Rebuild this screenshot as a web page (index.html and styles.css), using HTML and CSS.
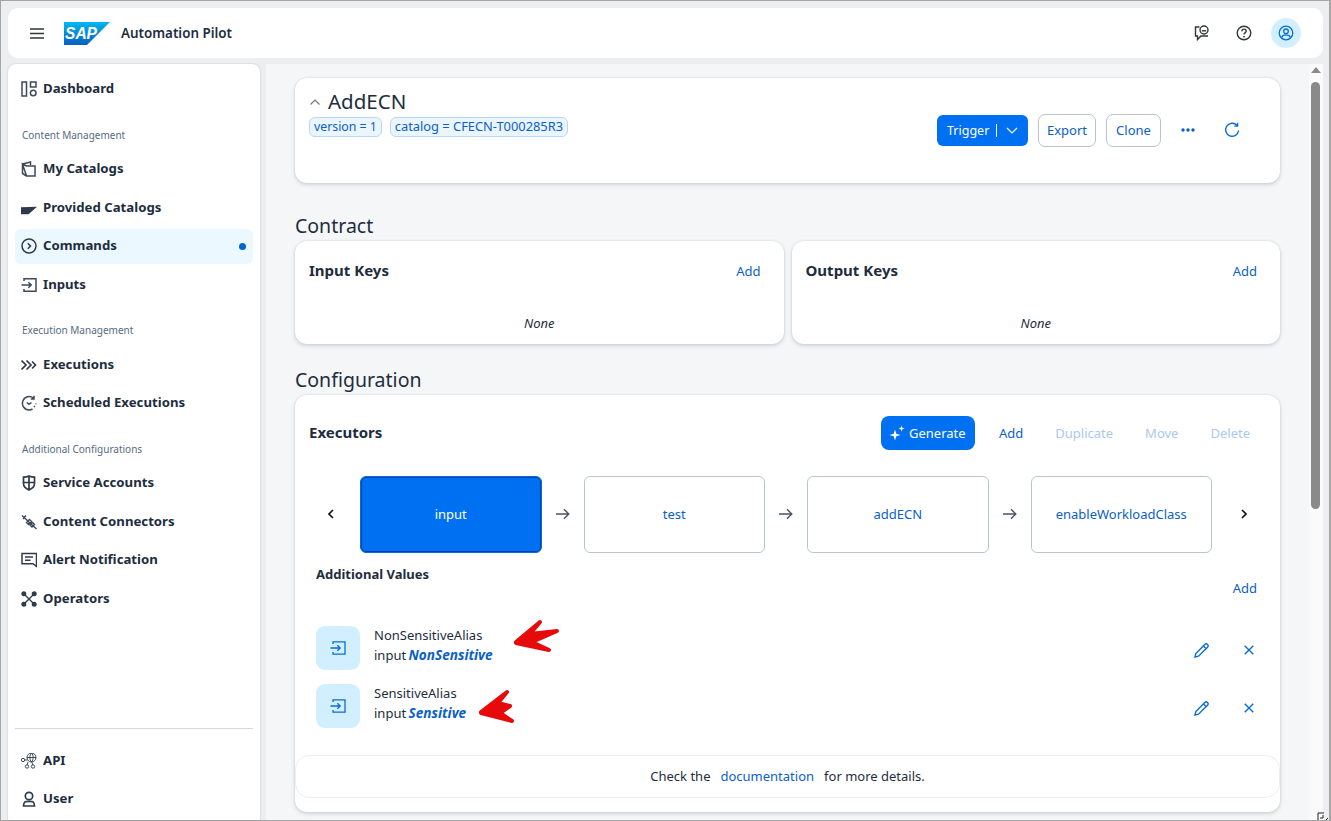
FILE: index.html
```html
<!DOCTYPE html>
<html lang="en">
<head>
<meta charset="utf-8">
<title>Automation Pilot</title>
<link rel="stylesheet" href="styles.css">
</head>
<body>
<div class="app">
  <header class="topbar">
    <div class="brand">
      <svg class="ico-menu" width="14" height="11" viewBox="0 0 14 11"><path d="M0 1h14M0 5.500h14M0 10h14" stroke="#32363a" stroke-width="1.500" fill="none"/></svg>
      <svg class="logo" width="46" height="23" viewBox="0 0 46 23"><defs><linearGradient id="sapg" x1="0" y1="0" x2="0" y2="1"><stop offset="0" stop-color="#00b8f1"/><stop offset="1" stop-color="#0a5fc0"/></linearGradient></defs><polygon points="0,0 46,0 23,23 0,23" fill="url(#sapg)"/><text class="logo-text" x="1" y="17" textLength="32" lengthAdjust="spacingAndGlyphs">SAP</text></svg>
      <span class="product">Automation Pilot</span>
    </div>
    <div class="top-actions">
      <svg width="18" height="18" viewBox="0 0 18 18" fill="none" stroke="#32363a" stroke-width="1.400"><path d="M6.500 3H2.500v9h2v3.500l3.500-3.500h7"/><circle cx="11" cy="6" r="4"/><path d="M8.800 6.800h4.400"/></svg>
      <svg width="18" height="18" viewBox="0 0 18 18" fill="none" stroke="#32363a" stroke-width="1.400"><circle cx="9" cy="9" r="6.800"/><path d="M6.900 7.200c0-1.300 1-2.100 2.200-2.100s2.100.9 2.100 2c0 1.900-2.200 1.700-2.200 3.500"/><path d="M9 12v1.400" stroke-width="1.600"/></svg>
      <span class="avatar"><svg width="16" height="16" viewBox="0 0 16 16" fill="none" stroke="#0a6ed1" stroke-width="1.300"><circle cx="8" cy="8" r="6.800"/><circle cx="8" cy="6.300" r="2.300"/><path d="M3.600 12.600c.5-1.900 2.300-2.700 4.400-2.700s3.900.8 4.400 2.700"/></svg></span>
    </div>
  </header>

  <div class="body-row">
    <nav class="sidebar">
      <div class="nav-top">
        <a class="nav-item"><svg class="nav-ico" viewBox="0 0 16 16" fill="none" stroke="#3c4a5a" stroke-width="1.500"><path d="M1 1h4.500v14H1zM9.500 1h5.500v5H9.500z"/><circle cx="12.200" cy="12" r="2.800"/></svg><span>Dashboard</span></a>
        <div class="nav-label">Content Management</div>
        <a class="nav-item"><svg class="nav-ico" viewBox="0 0 16 16" fill="none" stroke="#3c4a5a" stroke-width="1.500"><path d="M1.500 3 9.500 1v3M1.500 3l4 2h8.500v10H5.500zM1.500 3v9.500l4 2.500"/></svg><span>My Catalogs</span></a>
        <a class="nav-item"><svg class="nav-ico" viewBox="0 0 16 16"><path d="M0 7.300 16 6.700 7.500 14.300H0z" fill="#2f3b4a"/></svg><span>Provided Catalogs</span></a>
        <a class="nav-item active"><svg class="nav-ico" viewBox="0 0 16 16" fill="none" stroke="#2f3b4a" stroke-width="1.500"><circle cx="8" cy="8" r="7"/><path d="M6.800 5.300 9.500 8l-2.700 2.700"/></svg><span>Commands</span><i class="dot"></i></a>
        <a class="nav-item"><svg class="nav-ico" viewBox="0 0 16 16" fill="none" stroke="#3c4a5a" stroke-width="1.500"><path d="M3 4V1.800h12v12.400H3V12M.500 8H10M7.300 5.200 10.200 8l-2.900 2.800"/></svg><span>Inputs</span></a>
        <div class="nav-label">Execution Management</div>
        <a class="nav-item"><svg class="nav-ico" viewBox="0 0 16 16" fill="none" stroke="#2f3b4a" stroke-width="1.700"><path d="M.500 3.500 5 8l-4.500 4.500M5.500 3.500 10 8l-4.500 4.500M11 4.500 14.500 8 11 11.500"/></svg><span>Executions</span></a>
        <a class="nav-item"><svg class="nav-ico" viewBox="0 0 16 16" fill="none" stroke="#3c4a5a" stroke-width="1.500"><path d="M12.500 3.200A6.700 6.700 0 1 0 8 15c1.500 0 2.400-.3 3.500-1M13 .8v3.200H9.800M5.800 7.500 8 9.200 10.500 7.500M13 12l.8-1M15 8.500v.8"/></svg><span>Scheduled Executions</span></a>
        <div class="nav-label">Additional Configurations</div>
        <a class="nav-item"><svg class="nav-ico" viewBox="0 0 16 16" fill="none" stroke="#2f3b4a" stroke-width="1.700"><path d="M8 1c2 1 4 1.200 5.500 1.200v6.300c0 3-2.500 5.200-5.500 6.500-3-1.300-5.500-3.500-5.500-6.500V2.200C4 2.200 6 2 8 1zM8 1v14M2.500 7.500h11"/></svg><span>Service Accounts</span></a>
        <a class="nav-item"><svg class="nav-ico" viewBox="0 0 16 16" fill="none" stroke="#3c4a5a" stroke-width="1.400"><path d="M1 1.500 15.500 15M2 5l3-3.500M5.500 8.500l3-3 2 2-3 3zM9 11l2.500-2.500 2 2-2.500 2.500z"/></svg><span>Content Connectors</span></a>
        <a class="nav-item"><svg class="nav-ico" viewBox="0 0 16 16" fill="none" stroke="#2f3b4a" stroke-width="1.500"><path d="M1 1.500h14.500v13l-3.500-2.800H1zM4 5h8M4 8.300h5.500"/></svg><span>Alert Notification</span></a>
        <a class="nav-item"><svg class="nav-ico" viewBox="0 0 16 16" fill="#2f3b4a" stroke="#2f3b4a" stroke-width="1.400"><path d="M3 3l10 10M13 3 3 13"/><circle cx="2.800" cy="2.800" r="1.800"/><circle cx="13.200" cy="2.800" r="1.800"/><circle cx="2.800" cy="13.200" r="1.800"/><circle cx="13.200" cy="13.200" r="1.800"/></svg><span>Operators</span></a>
      </div>
      <div class="nav-bottom">
        <a class="nav-item"><svg class="nav-ico" viewBox="0 0 16 16" fill="none" stroke="#3c4a5a" stroke-width="1"><circle cx="10.500" cy="4.500" r="4.500"/><path d="M6 4.500h9M10.500 0c-2.200 2.500-2.200 6.500 0 9M10.500 0c2.200 2.500 2.200 6.500 0 9"/><circle cx="2" cy="7" r="1.700"/><circle cx="6" cy="13.500" r="1.700"/><circle cx="12" cy="13.500" r="1.700"/><path d="M3.700 7h3M7 9l-.8 3M10.800 9l1 3"/></svg><span>API</span></a>
        <a class="nav-item"><svg class="nav-ico" viewBox="0 0 16 16" fill="none" stroke="#2f3b4a" stroke-width="1.700"><circle cx="8" cy="5" r="3.700"/><path d="M2.500 15c0-2.200.2-3.200 1.500-4.200 1-.7 7-.7 8 0 1.300 1 1.500 2 1.500 4.200z"/></svg><span>User</span></a>
      </div>
    </nav>

    <main class="main">
      <div class="content">
        <section class="panel head-panel">
          <div class="head-info">
            <div class="title-row">
              <svg width="10" height="6" viewBox="0 0 10 6" fill="none" stroke="#6a7a8a" stroke-width="1.200"><path d="M.5 5.500 5 1l4.500 4.500"/></svg>
              <h1>AddECN</h1>
            </div>
            <div class="tags"><span class="tag">version = 1</span><span class="tag">catalog = CFECN-T000285R3</span></div>
          </div>
          <div class="head-actions">
            <button class="btn-trigger"><span>Trigger</span><i class="sep"></i><svg class="caret" width="12" height="7" viewBox="0 0 12 7" fill="none" stroke="#fff" stroke-width="1.200"><path d="M1 1l5 5 5-5"/></svg></button>
            <button class="btn-outline btn-export">Export</button>
            <button class="btn-outline btn-clone">Clone</button>
            <svg class="more" width="14" height="4" viewBox="0 0 14 4" fill="#0a5fc0"><circle cx="2" cy="2" r="1.700"/><circle cx="7" cy="2" r="1.700"/><circle cx="12" cy="2" r="1.700"/></svg>
            <svg class="refresh" width="16" height="16" viewBox="0 0 16 16" fill="none" stroke="#0a6ed1" stroke-width="1.400"><path d="M13 3.400A6.500 6.500 0 1 0 14.600 8.500M13.600.8v3.300h-3.300"/></svg>
          </div>
        </section>

        <h2 class="section-title">Contract</h2>
        <div class="keys">
          <section class="panel key-card">
            <div class="key-head"><h3>Input Keys</h3><a class="link">Add</a></div>
            <p class="none">None</p>
          </section>
          <section class="panel key-card">
            <div class="key-head"><h3>Output Keys</h3><a class="link">Add</a></div>
            <p class="none">None</p>
          </section>
        </div>

        <h2 class="section-title config-title">Configuration</h2>
        <section class="panel config">
          <div class="config-head">
            <h3>Executors</h3>
            <div class="tools">
              <button class="btn-generate"><svg width="16" height="16" viewBox="0 0 16 16" fill="#fff"><path d="M6 4.500 7.300 8.700 11.500 10 7.300 11.300 6 15.500 4.700 11.300.5 10 4.700 8.700zM12.500.5l.8 2.200 2.200.8-2.200.8-.8 2.200-.8-2.200-2.200-.8 2.200-.8z"/></svg><span>Generate</span></button>
              <a class="link">Add</a>
              <a class="link off">Duplicate</a>
              <a class="link off">Move</a>
              <a class="link off">Delete</a>
            </div>
          </div>

          <div class="flow">
            <svg class="chev" width="6" height="10" viewBox="0 0 6 10" fill="none" stroke="#111" stroke-width="1.600"><path d="M5 1 1 5l4 4"/></svg>
            <div class="step selected">input</div>
            <svg class="arrow" width="14" height="12" viewBox="0 0 14 12" fill="none" stroke="#4a5563" stroke-width="1.400"><path d="M0 6h12.500M8 1.200 12.800 6 8 10.800"/></svg>
            <div class="step">test</div>
            <svg class="arrow" width="14" height="12" viewBox="0 0 14 12" fill="none" stroke="#4a5563" stroke-width="1.400"><path d="M0 6h12.500M8 1.200 12.800 6 8 10.800"/></svg>
            <div class="step">addECN</div>
            <svg class="arrow" width="14" height="12" viewBox="0 0 14 12" fill="none" stroke="#4a5563" stroke-width="1.400"><path d="M0 6h12.500M8 1.200 12.800 6 8 10.800"/></svg>
            <div class="step">enableWorkloadClass</div>
            <svg class="chev" width="6" height="10" viewBox="0 0 6 10" fill="none" stroke="#111" stroke-width="1.600"><path d="M1 1l4 4-4 4"/></svg>
          </div>

          <h4 class="values-title">Additional Values</h4>
          <div class="values-add"><a class="link">Add</a></div>

          <div class="value-row">
            <span class="tile"><svg width="16" height="16" viewBox="0 0 16 16" fill="none" stroke="#0a6ed1" stroke-width="1.300"><path d="M3 4V1.800h12v12.400H3V12M.500 8H10M7.300 5.200 10.200 8l-2.900 2.800"/></svg></span>
            <div class="value-text"><div>NonSensitiveAlias</div><div>input <b>NonSensitive</b></div></div>
            <div class="value-actions">
              <svg width="15" height="15" viewBox="0 0 15 15" fill="none" stroke="#0a6ed1" stroke-width="1.400"><path d="M1 14l.8-3.500L10.800 1.500a1.600 1.600 0 0 1 2.700 2.700L4.500 13.200zM9.500 3l2.500 2.500"/></svg>
              <svg width="10" height="10" viewBox="0 0 10 10" fill="none" stroke="#0a6ed1" stroke-width="1.400"><path d="M.7.700l8.600 8.600M9.300.7.700 9.300"/></svg>
            </div>
          </div>
          <div class="value-row">
            <span class="tile"><svg width="16" height="16" viewBox="0 0 16 16" fill="none" stroke="#0a6ed1" stroke-width="1.300"><path d="M3 4V1.800h12v12.400H3V12M.500 8H10M7.300 5.200 10.200 8l-2.900 2.800"/></svg></span>
            <div class="value-text"><div>SensitiveAlias</div><div>input <b>Sensitive</b></div></div>
            <div class="value-actions">
              <svg width="15" height="15" viewBox="0 0 15 15" fill="none" stroke="#0a6ed1" stroke-width="1.400"><path d="M1 14l.8-3.500L10.800 1.500a1.600 1.600 0 0 1 2.700 2.700L4.500 13.200zM9.500 3l2.500 2.500"/></svg>
              <svg width="10" height="10" viewBox="0 0 10 10" fill="none" stroke="#0a6ed1" stroke-width="1.400"><path d="M.7.700l8.600 8.600M9.300.7.700 9.300"/></svg>
            </div>
          </div>

          <div class="doc-note"><span>Check the</span><a class="link">documentation</a><span>for more details.</span></div>
        </section>
      </div>
      <div class="scrollbar">
        <i class="scroll-up"></i>
        <i class="scroll-thumb"></i>
      </div>
    </main>
  </div>
</div>

<svg class="annot" width="1331" height="821" viewBox="0 0 1331 821" fill="#e60a0a" stroke="#e60a0a" stroke-linejoin="round" stroke-linecap="round">
  <path d="M516 642 540 622 530 634 557 631 532 642 549 650 516 643z" stroke-width="4"/>
  <path d="M481 712 507 692 498 703 510 706 500 713 512 721 481 713z" stroke-width="4"/>
</svg>
<svg class="grip" width="12" height="10" viewBox="0 0 12 10" fill="none" stroke="#222" stroke-width="1"><path d="M1 9V2h6M3 7h3V4M9 9l2-2M11 9v0"/></svg>
</body>
</html>
```

FILE: styles.css
```css
* { box-sizing: border-box; }
html, body { margin: 0; height: 100%; }
body {
  font-family: "Noto Sans", "Liberation Sans", sans-serif;
  font-size: 13px;
  color: #1d2d3e;
  background: #eceef0;
  overflow: hidden;
}
.app {
  height: 821px;
  width: 1331px;
  border: 1px solid #a6a6a6;
  border-width: 1px 2px 1px 1px;
  display: flex;
  flex-direction: column;
  gap: 6px;
  padding: 7px 6px 0 7px;
}
.topbar {
  height: 50px;
  flex: none;
  background: #fff;
  border-radius: 10px;
  display: flex;
  align-items: center;
  justify-content: space-between;
  padding: 0 22px;
}
.brand { display: flex; align-items: center; }
.logo { margin-left: 20px; }
.logo-text { font: italic 700 17px "Liberation Sans", sans-serif; fill: #fff; }
.product { margin-left: 11px; font-weight: 600; font-size: 13.400px; color: #1d2d3e; }
.top-actions { display: flex; align-items: center; gap: 24px; }
.avatar {
  width: 30px; height: 30px; border-radius: 50%;
  background: #d1efff;
  display: flex; align-items: center; justify-content: center;
  margin-left: -6px;
}
.body-row { flex: 1; min-height: 0; display: flex; gap: 6px; }
.sidebar {
  width: 252px;
  flex: none;
  background: #fff;
  border-radius: 8px 8px 0 0;
  box-shadow: 0 0 2px rgba(0,0,0,.2);
  padding: 8px 7px 0;
  display: flex;
  flex-direction: column;
  justify-content: space-between;
}
.nav-item {
  height: 35px;
  margin-bottom: 3.5px;
  display: flex;
  align-items: center;
  padding: 0 6px;
  border-radius: 6px;
  font-weight: 700;
  font-size: 13.200px;
  color: #1d2d3e;
}
.nav-item span { margin-bottom: 3px; }
.nav-ico { width: 16px; height: 16px; flex: none; margin: 0 6px 1px 0; }
.nav-item.active { background: #ebf8ff; }
.dot { width: 7px; height: 7px; border-radius: 50%; background: #0064d9; margin-left: auto; margin-right: 1px; }
.nav-label {
  height: 41.5px;
  padding: 7px 7px 0;
  display: flex;
  align-items: center;
  font-size: 10px;
  color: #556b82;
}
.nav-bottom { border-top: 1px solid #d9d9d9; padding-top: 15px; }
.nav-bottom .nav-item { margin-bottom: 3px; }
.main {
  flex: 1;
  min-width: 0;
  background: #f5f6f7;
  display: flex;
  overflow: hidden;
}
.content { flex: 1; min-width: 0; padding: 14px 29px 0; }
.panel {
  background: #fff;
  border-radius: 12px;
  box-shadow: 0 0 2px rgba(34,53,72,.16), 0 2px 4px rgba(34,53,72,.16);
}
.head-panel {
  height: 105px;
  padding: 12px 14px;
  display: flex;
  justify-content: space-between;
}
.title-row { display: flex; align-items: center; gap: 8px; height: 24px; padding: 0 0 1px 1px; }
h1 { margin: 0 0 1px; font-size: 20.500px; font-weight: 400; color: #1d2d3e; }
.tags { display: flex; gap: 8px; margin-top: 3px; }
.tag {
  height: 20px;
  padding: 0 4px;
  background: #ebf5fe;
  border: 1px solid #b8d6f7;
  border-radius: 6px;
  font-size: 12.850px;
  color: #0a60c8;
  line-height: 17px;
  white-space: nowrap;
}
.tag:first-child { font-size: 12.300px; }
.head-actions { display: flex; align-items: center; height: 34px; margin: 23px 26px 0 0; }
button { font-family: inherit; font-size: 13px; cursor: pointer; }
.btn-trigger {
  width: 91px; height: 31px;
  background: #0070f2; color: #fff;
  border: 0; border-radius: 6px;
  font-size: 12.500px;
  display: flex; align-items: center; padding: 0 10px;
}
.sep { width: 1px; height: 13px; background: #fff; margin: 0 9px 0 7px; }
.caret { flex: none; }
.btn-outline {
  height: 33px;
  margin-left: 10px;
  padding: 0;
  background: #fff;
  color: #0a60c8;
  border: 1px solid #b9c4cf;
  border-radius: 7px;
}
.btn-export { width: 58px; }
.btn-clone { width: 55px; }
.more { margin-left: 20px; }
.refresh { margin-left: 29px; }
.section-title { margin: 0; font-size: 19.500px; font-weight: 400; line-height: 27px; padding-top: 29px; height: 58px; }
.config-title { padding-top: 22px; height: 51px; }
.keys { display: grid; grid-template-columns: 488.500px 488.500px; gap: 8px; }
.key-card { height: 103px; padding: 0 23px 0 14px; }
.key-head { display: flex; justify-content: space-between; align-items: center; height: 60px; }
h3 { margin: 0 0 2px; font-size: 15px; font-weight: 700; color: #1d2d3e; }
.link { color: #0a60c8; white-space: nowrap; }
.off { color: #a9c9f0; }
.none { margin: 13px -23px 0 -14px; text-align: center; font-style: italic; color: #1d2d3e; }
.config { height: 417px; position: relative; padding: 0 23px 0 14px; }
.config-head { height: 74px; display: flex; justify-content: space-between; align-items: center; padding: 1px 7px 0 0; }
.tools { display: flex; align-items: center; gap: 32px; }
.btn-generate {
  height: 34px; width: 94px;
  background: #0070f2; color: #fff;
  border: 0; border-radius: 8px;
  display: flex; align-items: center; gap: 4px; padding: 0 8px;
}
.tools .btn-generate { margin-right: -8px; }
.flow {
  margin-top: 7px;
  display: flex;
  align-items: center;
}
.chev { flex: none; margin: 0 26px 2px 19px; }
.flow .chev:last-child { margin: 0 0 2px 29px; }
.step {
  width: 181.500px; height: 77px;
  flex: none;
  background: #fff;
  border: 1px solid #b9c4cf;
  border-radius: 6px;
  color: #0a60c8;
  padding-bottom: 2px;
  display: flex; align-items: center; justify-content: center;
}
.step.selected {
  background: #0070f2;
  color: #fff;
  border: 1px solid #0a6ed1;
  box-shadow: inset 0 0 0 1px #0040b0;
}
.arrow { margin: 0 14px 2px; flex: none; }
.values-title { margin: 12px 0 0 7px; font-size: 13px; font-weight: 700; line-height: 18px; }
.values-add { display: flex; justify-content: flex-end; margin-top: -4px; height: 20px; line-height: 18px; }
.value-row { display: flex; align-items: center; height: 44px; margin: 0 0 14px 7px; }
.values-add + .value-row { margin-top: 27px; }
.tile {
  width: 44px; height: 44px; flex: none;
  border-radius: 9px;
  background: #d1efff;
  display: flex; align-items: center; justify-content: center;
}
.value-text { margin: -6px 0 0 14px; line-height: 20px; }
.value-text b { color: #0a60c8; font-style: italic; font-weight: 700; font-size: 13.600px; margin-left: -1px; }
.value-actions { margin-left: auto; display: flex; align-items: center; gap: 35px; margin-right: 3px; margin-top: 4px; }
.doc-note {
  position: absolute;
  left: 0; right: 0; bottom: 14px;
  height: 43px;
  border: 1px solid #eceef0;
  border-radius: 14px;
  background: #fff;
  padding-bottom: 2px;
  display: flex; align-items: center; justify-content: center;
  gap: 10px;
}
.scrollbar {
  width: 14px; flex: none;
  background: #fafafa;
  position: relative;
}
.scroll-up {
  position: absolute; top: 3px; left: 2px;
  border-left: 5px solid transparent; border-right: 5px solid transparent;
  border-bottom: 6px solid #8a8a8a;
}
.scroll-thumb {
  position: absolute; top: 18px; left: 2px;
  width: 9px; height: 427px;
  border-radius: 5px;
  background: #8a8a8a;
}
.annot { position: absolute; left: 0; top: 0; pointer-events: none; }
.grip { position: absolute; right: 2px; bottom: 0; }
```
